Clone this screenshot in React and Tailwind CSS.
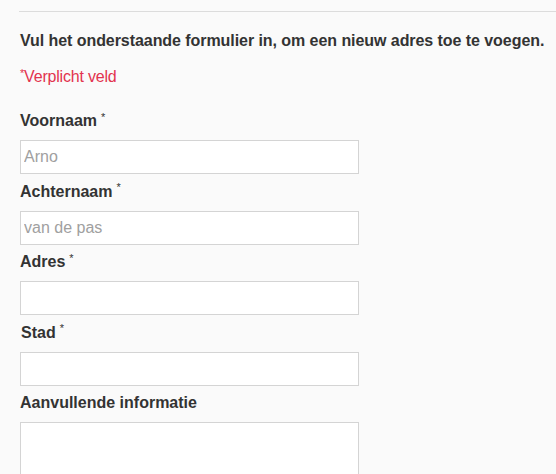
const fields = [
  { label: 'Voornaam', required: true, placeholder: 'Arno' },
  { label: 'Achternaam', required: true, placeholder: 'van de pas' },
  { label: 'Adres', required: true, placeholder: '' },
  { label: 'Stad', required: true, placeholder: '', indent: true },
]

function Label({ children, required, indent }) {
  return (
    <label className={`block h-[18px] text-[16px] font-bold leading-[18px] text-[#333] ${indent ? 'pl-px' : ''}`}>
      {children}
      {required && <sup className="ml-[4px] text-[11px] font-normal text-[#333]">*</sup>}
    </label>
  )
}

export default function App() {
  return (
    <div className="min-h-screen bg-[#fafafa] pt-[11px] font-['Liberation_Sans',Arial,sans-serif]">
      <div className="ml-[19px] border-t border-[#dcdcdc]" />

      <div className="pl-[20px]">
        <h2 className="mt-[20px] text-[16px] font-bold leading-[18px] tracking-[-0.06px] text-[#333]">
          Vul het onderstaande formulier in, om een nieuw adres toe te voegen.
        </h2>

        <p className="mt-[18px] text-[16px] leading-[18px] tracking-[-0.2px] text-[#e2334e]">
          <sup className="text-[11px]">*</sup>Verplicht veld
        </p>

        <form className="mt-[26px] w-[339px]">
          {fields.map((f) => (
            <div key={f.label} className="mb-[8.5px]">
              <Label required={f.required} indent={f.indent}>{f.label}</Label>
              <input
                type="text"
                placeholder={f.placeholder}
                className="mt-[10px] block h-[34px] w-full border border-[#d4d4d4] bg-white px-[3px] text-[16px] text-[#333] placeholder:text-[#a0a0a0] outline-none"
              />
            </div>
          ))}

          <div>
            <Label>Aanvullende informatie</Label>
            <textarea className="mt-[10px] block h-[90px] w-full resize-none border border-[#d4d4d4] bg-white outline-none" />
          </div>
        </form>
      </div>
    </div>
  )
}
